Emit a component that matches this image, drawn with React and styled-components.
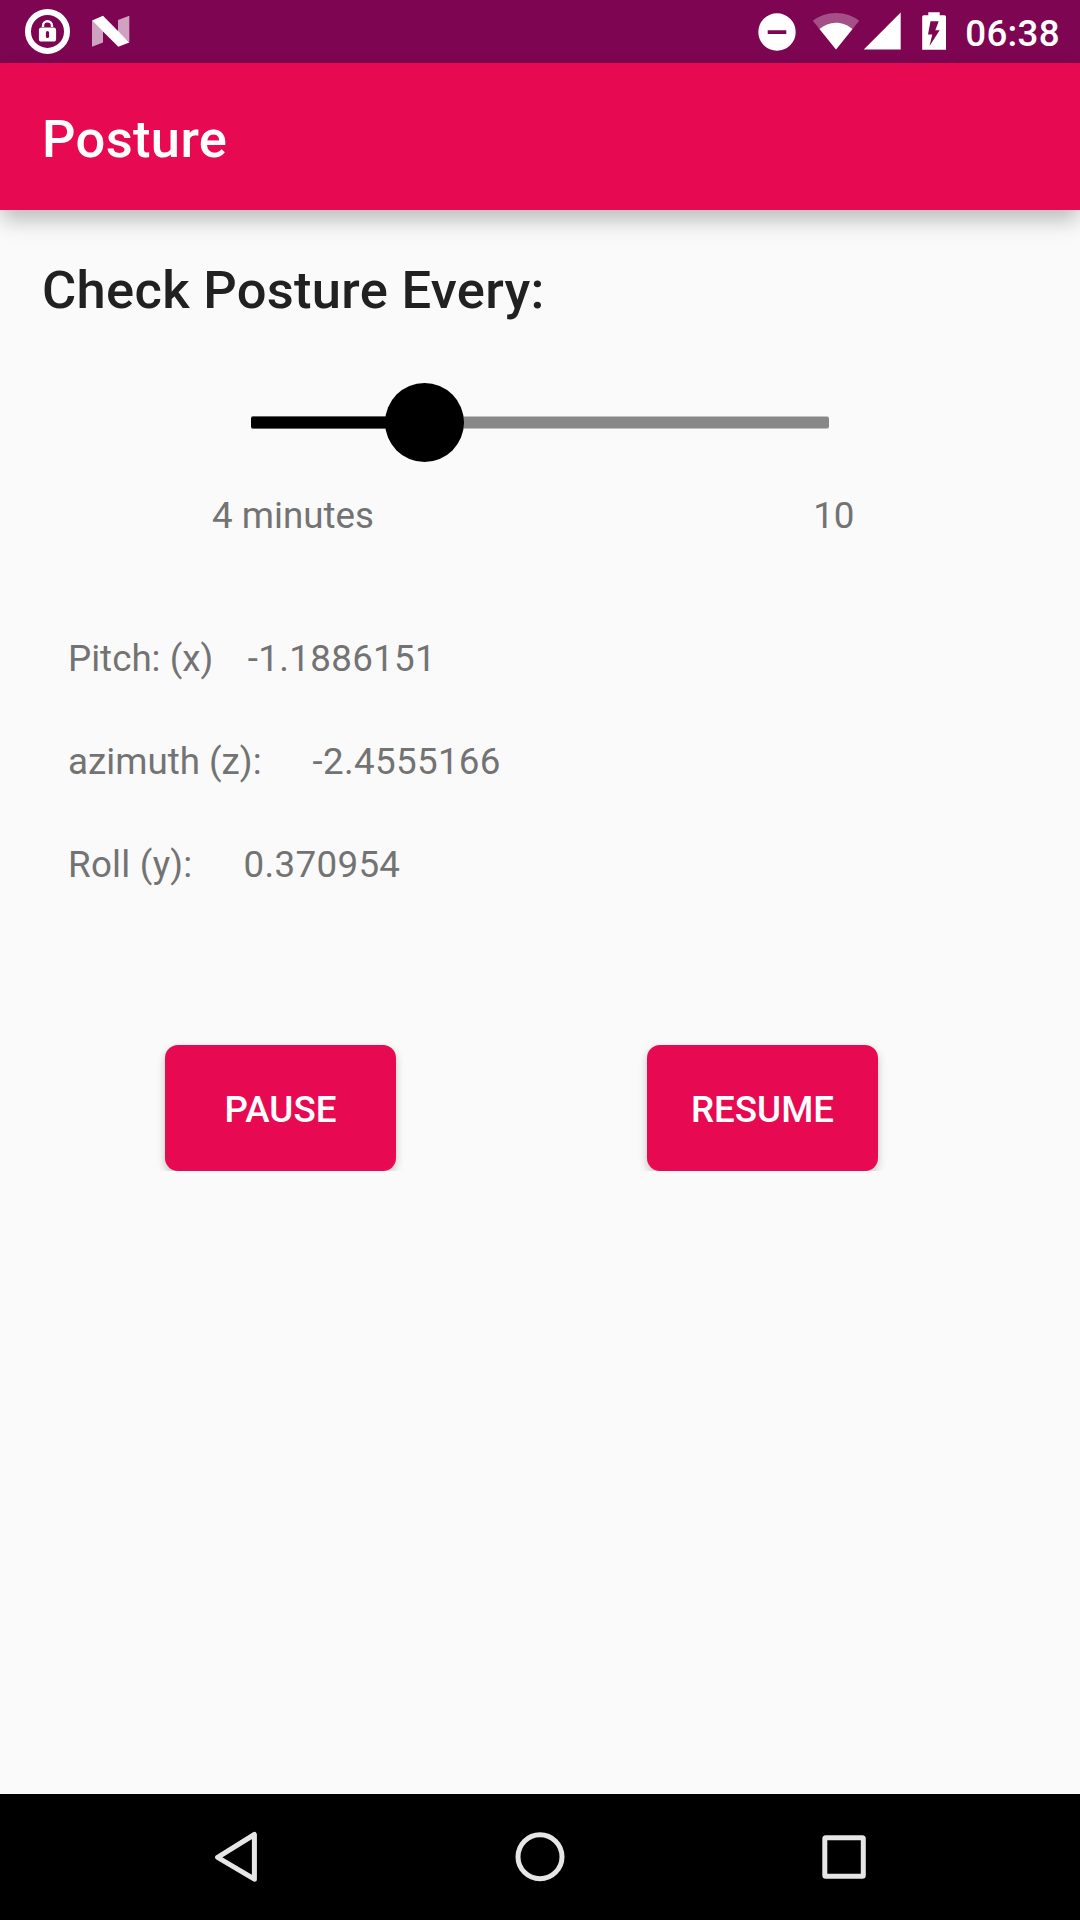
import React, { useState } from 'react';
import styled, { createGlobalStyle } from 'styled-components';

const GlobalStyle = createGlobalStyle`
    * {
        box-sizing: border-box;
    }
    body {
        margin: 0;
        background: #fafafa;
        font-family: Roboto, "Liberation Sans", sans-serif;
    }
`;

const Screen = styled.div`
    display: flex;
    flex-direction: column;
    width: 1080px;
    height: 1920px;
    background: #fafafa;
`;

const StatusBar = styled.div`
    display: flex;
    justify-content: space-between;
    flex: none;
    height: 63px;
    padding: 0 20px 0 25px;
    background: #7d0552;
    color: #ffffff;
`;

const StatusGroup = styled.div`
    display: flex;
    height: 63px;
`;

const StatusIcon = styled.svg`
    display: block;
    flex: none;
    width: ${props => props.$width}px;
    height: 63px;
    margin-right: ${props => props.$gap || 0}px;
    fill: #ffffff;
`;

const Clock = styled.div`
    padding-top: 12px;
    font-size: 36.75px;
    font-weight: 500;
    letter-spacing: 0.3px;
    line-height: 43px;
`;

const AppBar = styled.header`
    position: relative;
    flex: none;
    height: 147px;
    padding: 45px 42px 0;
    background: #e70a52;
    box-shadow: 0 12px 20px -2px rgba(0, 0, 0, 0.25);
    color: #ffffff;
`;

const Title = styled.h1`
    margin: 0;
    font-size: 52.5px;
    font-weight: 500;
    letter-spacing: 0.35px;
    line-height: 62px;
`;

const Content = styled.main`
    flex: 1;
    padding-top: 49px;
    color: #737373;
    font-size: 36.75px;
    line-height: 43px;
`;

const Heading = styled.h2`
    margin: 0 0 62px 42px;
    color: #212121;
    font-size: 52.5px;
    font-weight: 500;
    letter-spacing: 0.3px;
    line-height: 62px;
`;

const Slider = styled.div`
    position: relative;
    display: flex;
    align-items: center;
    width: 577.5px;
    height: 79px;
    margin-left: 251.25px;
`;

const Track = styled.div`
    width: 100%;
    height: 13px;
    border: solid rgba(136, 136, 136, 0.5);
    border-width: 1px 0;
    border-radius: 2px;
    background: #888888;
    background-clip: padding-box;
`;

const TrackFill = styled.div`
    height: 13px;
    margin-top: -1px;
    border: solid rgba(0, 0, 0, 0.5);
    border-width: 1px 0;
    border-radius: 2px;
    background: #000000;
    background-clip: padding-box;
`;

/* sits on top of the track */
const Thumb = styled.div`
    position: absolute;
    top: 0;
    width: 79px;
    height: 79px;
    margin-left: -40px;
    border-radius: 50%;
    background: #000000;
`;

const SliderLabels = styled.div`
    display: flex;
    justify-content: space-between;
    width: 642.5px;
    margin: 32px 0 0 212px;
`;

const Readings = styled.div`
    display: grid;
    row-gap: 60px;
    margin: 100px 0 0 68px;
`;

const Reading = styled.div`
    display: flex;
    column-gap: ${props => props.$gap}px;
    height: 43px;
    white-space: nowrap;
`;

const ReadingLabel = styled.span`
    letter-spacing: ${props => props.$spacing}px;
`;

const ReadingValue = styled.span`
    letter-spacing: 0.32px;
`;

const Actions = styled.div`
    display: flex;
    column-gap: 251px;
    margin: 159px 0 0 165px;
`;

const ActionButton = styled.button`
    width: 231px;
    height: 126px;
    padding: 3px 0 0;
    border: 0;
    border-radius: 13px;
    background: #e70a52;
    box-shadow: 0 4px 8px rgba(0, 0, 0, 0.22);
    clip-path: inset(-16px -16px 0 -16px);
    color: #ffffff;
    font-family: inherit;
    font-size: 36.75px;
    font-weight: 500;
    line-height: 43px;
    text-transform: uppercase;
`;

const NavBar = styled.nav`
    display: flex;
    justify-content: center;
    flex: none;
    height: 126px;
    background: #000000;
`;

const NavButton = styled.button`
    width: 304px;
    height: 126px;
    padding: 0;
    border: 0;
    background: none;

    svg {
        display: block;
        margin: 0 auto;
        fill: none;
        stroke: #e6e6e6;
        stroke-width: 5;
        stroke-linejoin: round;
    }
`;

const readings = [
    { label: 'Pitch: (x)', value: '-1.1886151', gap: 34.5, spacing: 0 },
    { label: 'azimuth (z):', value: '-2.4555166', gap: 51, spacing: 0 },
    { label: 'Roll (y):', value: '0.370954', gap: 51, spacing: 0.25 }
];

const MIN = 1;
const MAX = 11;

export default function App() {
    const [minutes] = useState(4);
    const percent = ((minutes - MIN) / (MAX - MIN)) * 100;

    return (
        <Screen>
            <GlobalStyle />
            <StatusBar>
                <StatusGroup>
                    {/* lock */}
                    <StatusIcon $width={45} $gap={22} viewBox="25 0 45 63">
                        <circle cx="47.5" cy="31.4" r="19.5" fill="none" stroke="#ffffff" strokeWidth="6" />
                        <path d="M43 27v-1.2a4.5 4.5 0 0 1 9 0V27" fill="none" stroke="#ffffff" strokeWidth="2.4" />
                        <path fillRule="evenodd" d="M41.5 27.6h12a2.6 2.6 0 0 1 2.6 2.6v8.7a2.6 2.6 0 0 1-2.6 2.6h-12a2.6 2.6 0 0 1-2.6-2.6v-8.7a2.6 2.6 0 0 1 2.6-2.6zM47.5 31a1.6 1.6 0 0 0-1.6 1.6v3.9a1.6 1.6 0 0 0 3.2 0v-3.9a1.6 1.6 0 0 0-1.6-1.6z" />
                    </StatusIcon>
                    {/* android n */}
                    <StatusIcon $width={38} viewBox="92 0 38 63">
                        <path opacity="0.63" d="M92 20.5V46.8l11-4.3V31z" />
                        <path opacity="0.63" d="M118 20l11.3-4.2v26.5L118 32z" />
                        <path d="M92 20.5l11-4.8 26.3 26.7-11 4.4z" />
                    </StatusIcon>
                </StatusGroup>
                <StatusGroup>
                    {/* do not disturb */}
                    <StatusIcon $width={38} $gap={16} viewBox="758 0 38 63">
                        <path fillRule="evenodd" d="M777 13.3a18.7 18.7 0 1 0 0 37.4a18.7 18.7 0 1 0 0-37.4zM767.7 30.2h18.6v3.8h-18.6z" />
                    </StatusIcon>
                    {/* wifi */}
                    <StatusIcon $width={48} $gap={4} viewBox="812 0 48 63">
                        <path opacity="0.3" d="M836 49.5L812.8 20.8C819 15.8 827 12.9 836 12.9s17 2.9 23.2 7.9z" />
                        <path d="M836 49.5L819.5 29C824 25 829.7 22.7 836 22.7s12 2.3 16.5 6.3z" />
                    </StatusIcon>
                    {/* signal */}
                    <StatusIcon $width={38} $gap={20} viewBox="864 0 38 63">
                        <path d="M900.7 12.5V49.5H863.7z" />
                    </StatusIcon>
                    {/* battery */}
                    <StatusIcon $width={25} $gap={18} viewBox="922 0 25 63">
                        <path fillRule="evenodd" d="M928.3 12.3h11.4v3H944.5q1.5 0 1.5 1.5V49.7H922.2V16.8q0-1.5 1.5-1.5h4.6zM930.5 21.2L928 34.5h4.3L929.5 46l10.2-15.7h-4.4L938.7 21.2z" />
                    </StatusIcon>
                    <Clock>06:38</Clock>
                </StatusGroup>
            </StatusBar>
            <AppBar>
                <Title>Posture</Title>
            </AppBar>
            <Content>
                <Heading>Check Posture Every:</Heading>
                <Slider>
                    <Track>
                        <TrackFill style={{ width: `${percent}%` }} />
                    </Track>
                    <Thumb style={{ left: `${percent}%` }} />
                </Slider>
                <SliderLabels>
                    <span>{minutes} minutes</span>
                    <span>10</span>
                </SliderLabels>
                <Readings>
                    {readings.map(elem => (
                        <Reading key={elem.label} $gap={elem.gap}>
                            <ReadingLabel $spacing={elem.spacing}>{elem.label}</ReadingLabel>
                            <ReadingValue>{elem.value}</ReadingValue>
                        </Reading>
                    ))}
                </Readings>
                <Actions>
                    <ActionButton>Pause</ActionButton>
                    <ActionButton>Resume</ActionButton>
                </Actions>
            </Content>
            <NavBar>
                <NavButton aria-label="Back">
                    <svg width="60" height="126" viewBox="206 0 60 126">
                        <path d="M254.4 40.5V85.2L217.6 63.3z" />
                    </svg>
                </NavButton>
                <NavButton aria-label="Home">
                    <svg width="60" height="126" viewBox="510 0 60 126">
                        <circle cx="540" cy="62.8" r="22" />
                    </svg>
                </NavButton>
                <NavButton aria-label="Recent apps">
                    <svg width="60" height="126" viewBox="814 0 60 126">
                        <rect x="824.8" y="43.7" width="38.5" height="38.5" rx="1" />
                    </svg>
                </NavButton>
            </NavBar>
        </Screen>
    );
}
